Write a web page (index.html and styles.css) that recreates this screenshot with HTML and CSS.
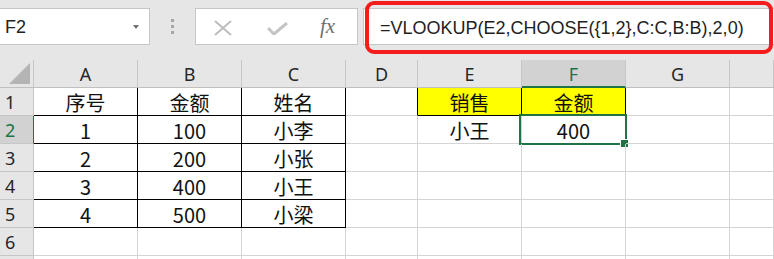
FILE: index.html
```html
<!DOCTYPE html>
<html>
<head>
<meta charset="utf-8">
<link rel="stylesheet" href="styles.css">
</head>
<body>
<div class="app">
  <div class="toolbar">
    <div class="namebox"><span class="nb-text">F2</span><span class="caret"></span></div>
    <div class="grip"><i></i><i></i><i></i></div>
    <div class="btns">
      <svg class="ico-x" width="20" height="16" viewBox="0 0 20 16"><path d="M2 1 L18 15 M18 1 L2 15" stroke="#bdbdbd" stroke-width="2" fill="none"/></svg>
      <svg class="ico-ok" width="21" height="13" viewBox="0 0 21 13"><path d="M1 6 L7 12 L20 1" stroke="#c4c4c4" stroke-width="3" fill="none"/></svg>
      <span class="fx">fx</span>
    </div>
    <div class="formula">=VLOOKUP(E2,CHOOSE({1,2},C:C,B:B),2,0)</div>
    <div class="redbox"></div>
  </div>
  <div class="sheet">
    <div class="c ch corner"><svg width="22" height="21" viewBox="0 0 22 21"><path d="M21 0 L21 21 L0 21 Z" fill="#b4b4b4"/></svg></div>
    <div class="c ch">A</div><div class="c ch">B</div><div class="c ch">C</div><div class="c ch">D</div><div class="c ch">E</div><div class="c ch sel">F</div><div class="c ch">G</div><div class="c ch"></div>

    <div class="c rh">1</div>
    <div class="c b">序号</div><div class="c b">金额</div><div class="c b">姓名</div><div class="c br"></div><div class="c b y">销售</div><div class="c b y">金额</div><div class="c"></div><div class="c"></div>

    <div class="c rh rsel">2</div>
    <div class="c b">1</div><div class="c b">100</div><div class="c b">小李</div><div class="c"></div><div class="c">小王</div><div class="c active">400<span class="selbox"></span><span class="handle"></span></div><div class="c"></div><div class="c"></div>

    <div class="c rh">3</div>
    <div class="c b">2</div><div class="c b">200</div><div class="c b">小张</div><div class="c"></div><div class="c"></div><div class="c"></div><div class="c"></div><div class="c"></div>

    <div class="c rh">4</div>
    <div class="c b">3</div><div class="c b">400</div><div class="c b">小王</div><div class="c"></div><div class="c"></div><div class="c"></div><div class="c"></div><div class="c"></div>

    <div class="c rh">5</div>
    <div class="c b">4</div><div class="c b">500</div><div class="c b">小梁</div><div class="c"></div><div class="c"></div><div class="c"></div><div class="c"></div><div class="c"></div>

    <div class="c rh">6</div>
    <div class="c"></div><div class="c"></div><div class="c"></div><div class="c"></div><div class="c"></div><div class="c"></div><div class="c"></div><div class="c"></div>

    <div class="c rh"></div>
    <div class="c"></div><div class="c"></div><div class="c"></div><div class="c"></div><div class="c"></div><div class="c"></div><div class="c"></div><div class="c"></div>
  </div>
</div>
</body>
</html>
```
FILE: styles.css
```css
* { box-sizing: border-box; }
html, body { margin: 0; padding: 0; }
body { width: 774px; height: 259px; overflow: hidden; background: #fff; }
.app { width: 774px; height: 259px; overflow: hidden; }

.toolbar {
  position: relative;
  height: 60px;
  background: #e6e6e6;
  display: flex;
  align-items: flex-start;
  padding-top: 8px;
}
.namebox {
  margin-left: -1px;
  width: 151px;
  height: 37px;
  background: #fff;
  border: 1px solid #c6c6c6;
  display: flex;
  align-items: center;
  justify-content: space-between;
  padding: 2px 10px 0 5px;
  font: 18px "Liberation Sans", Arial, sans-serif;
  color: #222;
}
.caret {
  width: 0; height: 0;
  border-left: 3px solid transparent;
  border-right: 3px solid transparent;
  border-top: 4px solid #707070;
  margin-top: -2px;
}
.grip {
  width: 45px;
  height: 37px;
  display: flex;
  flex-direction: column;
  align-items: center;
  justify-content: center;
  gap: 3px;
}
.grip i { display: block; width: 3px; height: 3px; background: #a6a6a6; }
.btns {
  width: 163px;
  height: 37px;
  background: #fff;
  border: 1px solid #c6c6c6;
  display: flex;
  align-items: center;
  padding-left: 17px;
}
.ico-x { margin-top: 2px; }
.ico-ok { margin-left: 34px; margin-top: 4px; }
.fx {
  margin-left: 32px;
  font: italic 21px "Liberation Serif", "Times New Roman", serif;
  color: #6f6f6f;
  margin-top: -1px;
}
.formula {
  margin-left: 5px;
  flex: 1;
  height: 37px;
  margin-right: -2px;
  background: #fff;
  border: 1px solid #c6c6c6;
  display: flex;
  align-items: center;
  padding: 3px 0 0 16px;
  font: 18px "Liberation Sans", Arial, sans-serif;
  color: #1e1e1e;
  white-space: nowrap;
}
.redbox {
  position: absolute;
  left: 365px;
  top: 1px;
  width: 408px;
  height: 53px;
  border: 4px solid #f41c1c;
  border-radius: 9px;
}

.sheet {
  display: grid;
  grid-template-columns: 34px 104px 104px 104px 72px 104px 104px 104px 1fr;
  grid-auto-rows: 28px;
}
.c {
  position: relative;
  border-right: 1px solid #d4d4d4;
  border-bottom: 1px solid #d4d4d4;
  display: flex;
  align-items: center;
  justify-content: center;
  font: 20px "Noto Sans CJK SC", "Noto Sans", sans-serif;
  color: #111;
  padding-top: 1px;
}
.ch {
  background: #e6e6e6;
  border-right-color: #c6c6c6;
  border-bottom-color: #bfbfbf;
  font: 18px "Noto Sans", "Liberation Sans", sans-serif;
  color: #262626;
}
.ch.sel {
  background: #d2d2d2;
  color: #217346;
  border-bottom: 2px solid #217346;
}
.corner { align-items: flex-end; justify-content: flex-end; padding: 0 2px 3px 0; }
.rh {
  background: #e6e6e6;
  border-right-color: #c6c6c6;
  border-bottom-color: #c6c6c6;
  justify-content: flex-start;
  padding-left: 5px;
  font: 18px "Noto Sans", "Liberation Sans", sans-serif;
  color: #262626;
}
.rh.rsel {
  background: #d2d2d2;
  color: #217346;
  border-right-color: #217346;
}
.b { border-right-color: #000; border-bottom-color: #000; }
.br { border-right-color: #000; }
.y { background: #ffff00; }
.selbox {
  position: absolute;
  left: -3px;
  top: -2px;
  right: -2px;
  bottom: -2px;
  border: 2px solid #217346;
}
.handle {
  position: absolute;
  right: -4px;
  bottom: -5px;
  width: 9px;
  height: 9px;
  background: #217346;
  border: 1px solid #fff;
}
```
